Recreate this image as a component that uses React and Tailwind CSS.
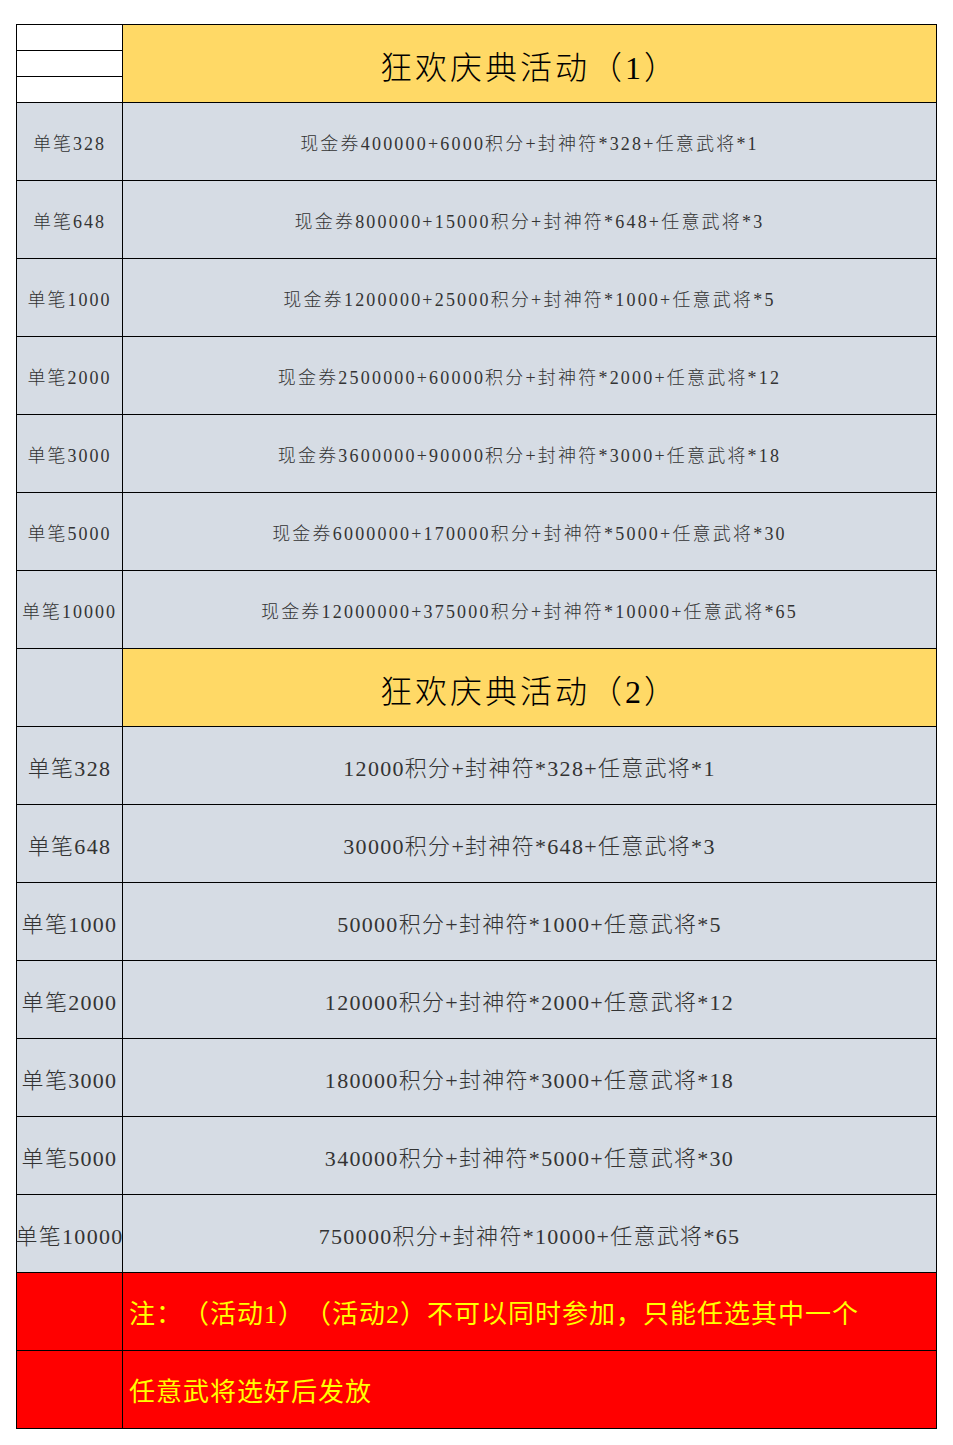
import React from "react";

const sec1 = [
  ["单笔328", "现金券400000+6000积分+封神符*328+任意武将*1"],
  ["单笔648", "现金券800000+15000积分+封神符*648+任意武将*3"],
  ["单笔1000", "现金券1200000+25000积分+封神符*1000+任意武将*5"],
  ["单笔2000", "现金券2500000+60000积分+封神符*2000+任意武将*12"],
  ["单笔3000", "现金券3600000+90000积分+封神符*3000+任意武将*18"],
  ["单笔5000", "现金券6000000+170000积分+封神符*5000+任意武将*30"],
  ["单笔10000", "现金券12000000+375000积分+封神符*10000+任意武将*65"],
];

const sec2 = [
  ["单笔328", "12000积分+封神符*328+任意武将*1"],
  ["单笔648", "30000积分+封神符*648+任意武将*3"],
  ["单笔1000", "50000积分+封神符*1000+任意武将*5"],
  ["单笔2000", "120000积分+封神符*2000+任意武将*12"],
  ["单笔3000", "180000积分+封神符*3000+任意武将*18"],
  ["单笔5000", "340000积分+封神符*5000+任意武将*30"],
  ["单笔10000", "750000积分+封神符*10000+任意武将*65"],
];

function Cell({ className = "", children }) {
  return (
    <div className={"h-[77px] flex items-center justify-center whitespace-nowrap " + className}>
      {children}
    </div>
  );
}

export default function App() {
  return (
    <div className="bg-white w-[953px] h-[1445px] pt-[24px] pl-[16px] font-light [text-spacing-trim:space-all] font-['Liberation_Serif','Noto_Sans_CJK_SC',serif]">
      <div className="w-[921px] bg-black p-px grid grid-cols-[105px_813px] gap-px">
        {/* header 1 */}
        <div className="h-[77px] flex flex-col gap-px bg-black">
          <div className="h-[25px] bg-white" />
          <div className="h-[25px] bg-white" />
          <div className="h-[25px] bg-white" />
        </div>
        <Cell className="bg-[#FFD966] text-[32px] tracking-[3px] text-black pt-[8px]">狂欢庆典活动（1）</Cell>

        {sec1.map(([a, b]) => (
          <React.Fragment key={"a" + a}>
            <Cell className="bg-[#D6DCE4] text-[18px] tracking-[2px] text-[#333] pt-[5px]">{a}</Cell>
            <Cell className="bg-[#D6DCE4] text-[18px] tracking-[2.2px] text-[#333] pt-[5px]">{b}</Cell>
          </React.Fragment>
        ))}

        {/* header 2 */}
        <Cell className="bg-[#D6DCE4]" />
        <Cell className="bg-[#FFD966] text-[32px] tracking-[3px] text-black pt-[8px]">狂欢庆典活动（2）</Cell>

        {sec2.map(([a, b]) => (
          <React.Fragment key={"b" + a}>
            <Cell className="bg-[#D6DCE4] text-[22px] tracking-[1.3px] text-[#333] pt-[5px]">{a}</Cell>
            <Cell className="bg-[#D6DCE4] text-[22px] tracking-[1.3px] text-[#333] pt-[5px]">{b}</Cell>
          </React.Fragment>
        ))}

        <Cell className="bg-[#FF0000]" />
        <div className="h-[77px] bg-[#FF0000] flex items-center pl-[6px] pt-[5px] text-[26px] tracking-[1px] text-[#FFFF00] font-normal whitespace-nowrap">
          注：（活动1）（活动2）不可以同时参加，只能任选其中一个
        </div>
        <Cell className="bg-[#FF0000]" />
        <div className="h-[77px] bg-[#FF0000] flex items-center pl-[6px] pt-[5px] text-[26px] tracking-[1px] text-[#FFFF00] font-normal whitespace-nowrap">
          任意武将选好后发放
        </div>
      </div>
    </div>
  );
}
